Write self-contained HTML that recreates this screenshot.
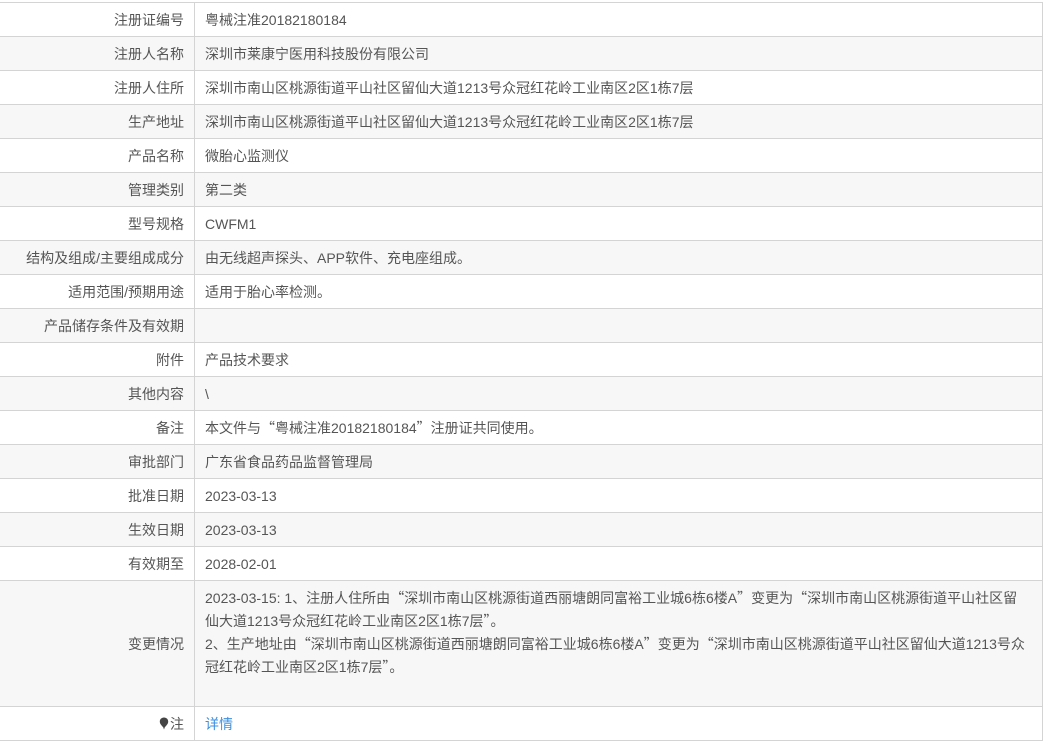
<!DOCTYPE html>
<html><head><meta charset="utf-8"><style>
body{margin:0;background:#fff;font-family:"Liberation Sans","Noto Sans CJK SC",sans-serif;font-size:14px;color:#555;}
table{position:absolute;left:-1px;top:2px;width:1044px;border-collapse:collapse;table-layout:fixed;}
td{border:1px solid #d4d4d4;height:33px;padding:0 10px;vertical-align:middle;overflow:hidden;white-space:nowrap;}
td.l{width:174px;text-align:right;}
tr:nth-child(even) td{background:#f7f7f7;}
td.chg{height:125px;padding:0 10px;vertical-align:top;white-space:normal;}
.chg div{height:125px;box-sizing:border-box;padding-top:6px;line-height:23px;}
q{quotes:none;font-family:"Noto Sans CJK SC",sans-serif;}
a{color:#3d8fe0;text-decoration:none;}
</style></head><body>
<table>
<tr><td class="l">注册证编号</td><td>粤械注准20182180184</td></tr>
<tr><td class="l">注册人名称</td><td>深圳市莱康宁医用科技股份有限公司</td></tr>
<tr><td class="l">注册人住所</td><td>深圳市南山区桃源街道平山社区留仙大道1213号众冠红花岭工业南区2区1栋7层</td></tr>
<tr><td class="l">生产地址</td><td>深圳市南山区桃源街道平山社区留仙大道1213号众冠红花岭工业南区2区1栋7层</td></tr>
<tr><td class="l">产品名称</td><td>微胎心监测仪</td></tr>
<tr><td class="l">管理类别</td><td>第二类</td></tr>
<tr><td class="l">型号规格</td><td>CWFM1</td></tr>
<tr><td class="l">结构及组成/主要组成成分</td><td>由无线超声探头、APP软件、充电座组成。</td></tr>
<tr><td class="l">适用范围/预期用途</td><td>适用于胎心率检测。</td></tr>
<tr><td class="l">产品储存条件及有效期</td><td></td></tr>
<tr><td class="l">附件</td><td>产品技术要求</td></tr>
<tr><td class="l">其他内容</td><td>\</td></tr>
<tr><td class="l">备注</td><td>本文件与<q>“</q>粤械注准20182180184<q>”</q>注册证共同使用。</td></tr>
<tr><td class="l">审批部门</td><td>广东省食品药品监督管理局</td></tr>
<tr><td class="l">批准日期</td><td>2023-03-13</td></tr>
<tr><td class="l">生效日期</td><td>2023-03-13</td></tr>
<tr><td class="l">有效期至</td><td>2028-02-01</td></tr>
<tr><td class="l">变更情况</td><td class="chg"><div>2023-03-15: 1、注册人住所由<q>“</q>深圳市南山区桃源街道西丽塘朗同富裕工业城6栋6楼A<q>”</q>变更为<q>“</q>深圳市南山区桃源街道平山社区留<br>仙大道1213号众冠红花岭工业南区2区1栋7层<q>”</q>。<br>2、生产地址由<q>“</q>深圳市南山区桃源街道西丽塘朗同富裕工业城6栋6楼A<q>”</q>变更为<q>“</q>深圳市南山区桃源街道平山社区留仙大道1213号众<br>冠红花岭工业南区2区1栋7层<q>”</q>。</div></td></tr>
<tr><td class="l"><svg width="10" height="13" viewBox="0 0 10 13" style="vertical-align:-1px;margin-right:1px"><path d="M5 0.5C2.5 0.5 0.8 2.3 0.8 4.6C0.8 7 3 8.8 4.2 10.3L5 12.5L5.8 10.3C7 8.8 9.2 7 9.2 4.6C9.2 2.3 7.5 0.5 5 0.5Z" fill="#444"/></svg>注</td><td><a>详情</a></td></tr>
</table>
</body></html>
